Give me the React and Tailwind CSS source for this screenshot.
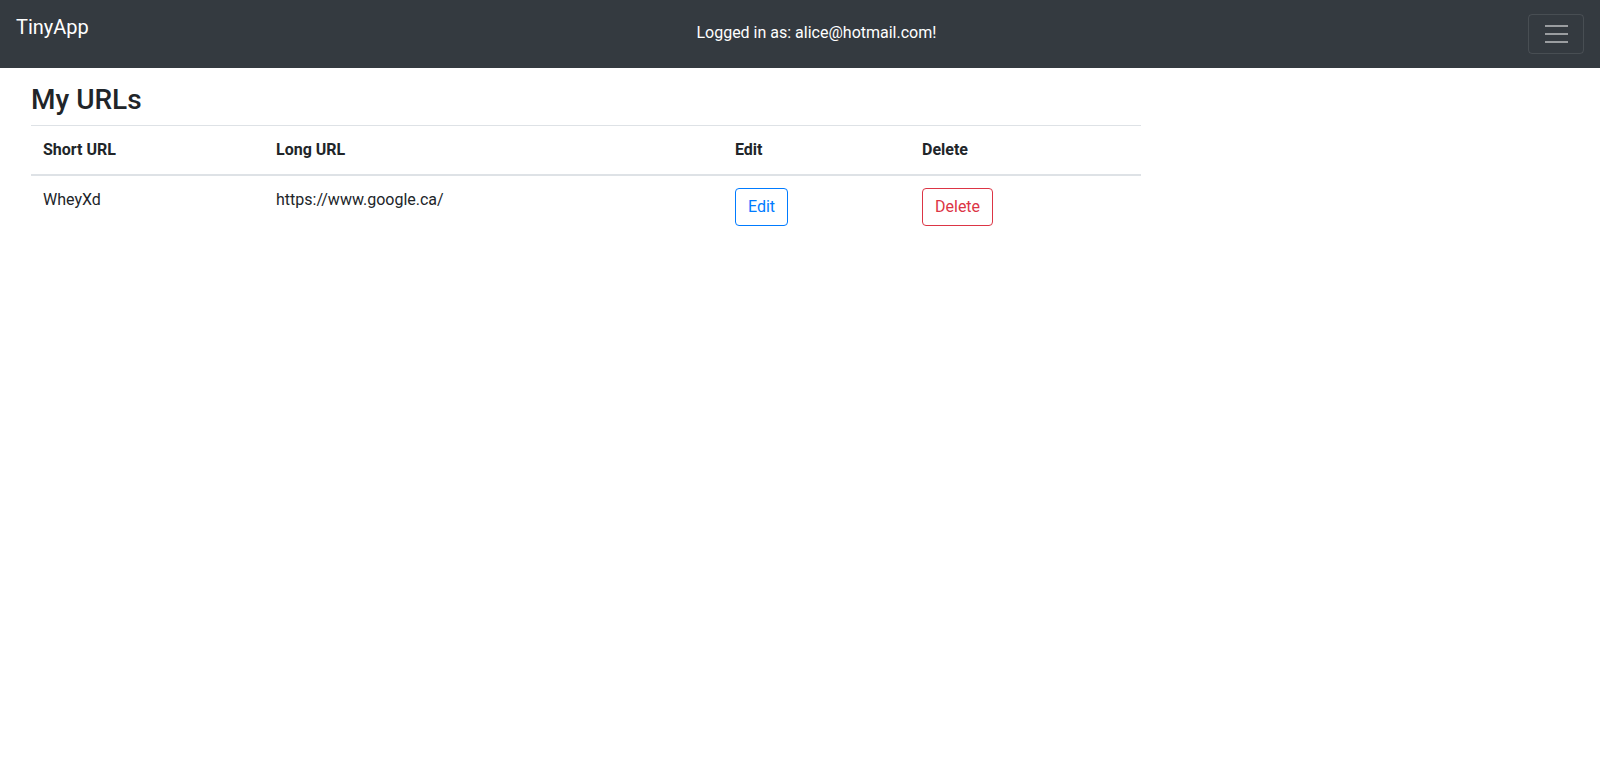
import React from "react";

const urls = [{ short: "WheyXd", long: "https://www.google.ca/" }];

const App = () => {
  return (
    <div
      className="min-h-screen bg-white text-[#212529]"
      style={{ fontFamily: "Roboto, 'Liberation Sans', sans-serif" }}
    >
      {/* Navbar */}
      <nav className="flex h-[68px] items-start justify-between bg-[#343a40] px-4">
        <a href="#" className="mr-4 mt-[12px] text-[20px] leading-[30px] text-white">
          TinyApp
        </a>
        <div className="mt-[21px] text-[16px] leading-6 text-white">
          Logged in as: alice@hotmail.com!
        </div>
        <button className="mt-[14px] flex h-[40px] w-[56px] flex-col items-center justify-center gap-[6px] rounded border border-white/10">
          <span className="block h-[2px] w-[23px] bg-white/50"></span>
          <span className="block h-[2px] w-[23px] bg-white/50"></span>
          <span className="block h-[2px] w-[23px] bg-white/50"></span>
        </button>
      </nav>

      {/* Main */}
      <main className="pl-[31px] pt-[15px]">
        <h3 className="mb-2 text-[28px] font-medium leading-[1.2]">My URLs</h3>
        <table className="w-[1110px] border-collapse text-left text-[16px] leading-6">
          <thead>
            <tr className="border-t border-[#dee2e6]">
              <th className="w-[233px] border-b-2 border-[#dee2e6] p-3 font-bold">Short URL</th>
              <th className="w-[459px] border-b-2 border-[#dee2e6] p-3 font-bold">Long URL</th>
              <th className="w-[187px] border-b-2 border-[#dee2e6] p-3 font-bold">Edit</th>
              <th className="border-b-2 border-[#dee2e6] p-3 font-bold">Delete</th>
            </tr>
          </thead>
          <tbody>
            {urls.map((url) => (
              <tr key={url.short}>
                <td className="p-3 align-top">{url.short}</td>
                <td className="p-3 align-top">{url.long}</td>
                <td className="p-3 align-top">
                  <button className="rounded border border-[#007bff] px-3 py-[6px] leading-6 text-[#007bff]">
                    Edit
                  </button>
                </td>
                <td className="p-3 align-top">
                  <button className="rounded border border-[#dc3545] px-3 py-[6px] leading-6 text-[#dc3545]">
                    Delete
                  </button>
                </td>
              </tr>
            ))}
          </tbody>
        </table>
      </main>
    </div>
  );
};

export default App;
